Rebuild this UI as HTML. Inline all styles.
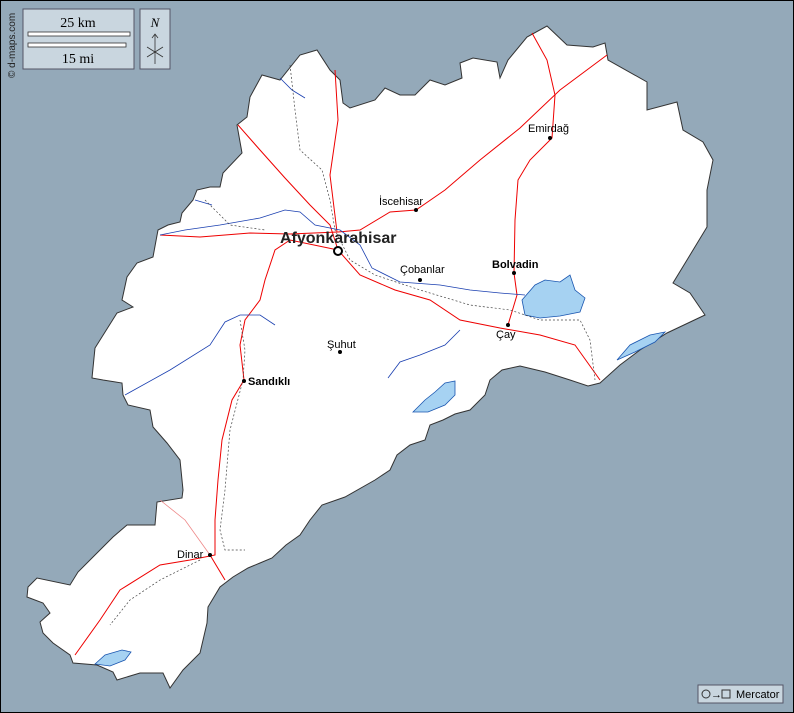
<!DOCTYPE html>
<html><head><meta charset="utf-8"><style>
body{margin:0;width:794px;height:713px;overflow:hidden;background:#94a9b9;font-family:"Liberation Sans",sans-serif}
svg{position:absolute;left:0;top:0}
</style></head><body>
<svg width="794" height="713" viewBox="0 0 794 713">
<rect x="0.5" y="0.5" width="793" height="712" fill="#94a9b9" stroke="#000"/>
<path d="M237,125 L242,153 L223,173 L220,187 L210,187 L197,190 L193,200 L182,213 L180,222 L168,225 L158,230 L153,257 L137,263 L127,277 L122,300 L133,307 L117,313 L95,348 L92,378 L103,380 L122,383 L123,395 L128,405 L150,410 L153,427 L167,443 L180,460 L183,490 L182,498 L157,502 L155,525 L127,525 L113,537 L90,560 L78,572 L70,585 L37,578 L28,587 L27,597 L43,603 L50,613 L40,622 L43,633 L53,643 L70,655 L73,663 L97,665 L113,672 L117,680 L140,673 L163,673 L170,688 L183,670 L200,653 L207,623 L208,607 L220,587 L233,577 L248,568 L260,563 L272,558 L286,545 L300,535 L310,520 L322,505 L345,497 L375,480 L390,470 L397,455 L410,445 L425,440 L430,425 L443,420 L455,414 L470,410 L485,395 L490,380 L502,370 L520,366 L545,372 L570,380 L588,386 L600,383 L620,365 L640,350 L667,333 L705,315 L690,293 L673,283 L687,260 L707,227 L707,190 L713,160 L703,142 L683,130 L677,102 L647,110 L647,82 L608,60 L605,43 L593,47 L567,45 L547,26 L527,37 L508,60 L500,78 L497,62 L473,58 L460,63 L462,78 L445,85 L430,80 L415,95 L400,95 L385,88 L375,100 L350,108 L343,103 L340,80 L330,70 L317,50 L300,55 L280,80 L262,75 L250,97 L247,117 Z" fill="#fff" stroke="#333" stroke-width="1"/>
<g fill="#a6d2f2" stroke="#1a56b0" stroke-width="0.8">
<path d="M522,300 L535,285 L545,280 L560,282 L570,275 L575,290 L585,298 L580,312 L560,316 L540,318 L525,315 Z"/>
<path d="M617,360 L630,345 L650,335 L665,332 L655,342 L635,352 Z"/>
<path d="M413,412 L425,400 L435,392 L445,383 L455,381 L455,395 L445,405 L428,412 Z"/>
<path d="M95,664 L105,655 L122,650 L131,652 L125,660 L110,666 Z"/>
</g>
<g fill="none" stroke="#e00" stroke-width="1">
<path d="M160,235 L200,237 L250,233 L290,234 L338,232 L360,230 L390,212 L416,210 L445,190 L480,160 L520,128 L560,90 L607,55"/>
<path d="M532,33 L547,60 L555,95 L552,138 L530,160 L518,180 L515,220 L514,273 L517,295 L508,325"/>
<path d="M238,125 L260,150 L285,178 L310,205 L330,225 L338,250 L360,275 L395,290 L430,300 L460,320 L500,328 L540,335 L575,345 L600,380"/>
<path d="M338,250 L290,240 L275,250 L265,280 L260,300 L245,320 L240,345 L244,380 L232,400 L222,440 L218,480 L215,520 L215,555 L190,560 L160,565 L120,590 L100,620 L75,655"/>
<path d="M210,555 L225,580"/>
<path d="M335,70 L338,120 L330,175 L337,232"/>
</g>
<g fill="none" stroke="#e88" stroke-width="0.8"><path d="M160,500 L185,520 L210,555"/></g>
<g fill="none" stroke="#1a3fb0" stroke-width="0.8">
<path d="M280,78 L292,90 L305,98"/>
<path d="M160,235 L185,230 L220,225 L260,218 L285,210 L300,212 L315,225 L340,230 L360,245 L372,268 L400,282 L440,285 L470,290 L500,293 L525,295"/>
<path d="M125,395 L170,370 L210,345 L225,322 L240,315 L260,315 L275,325"/>
<path d="M388,378 L400,362 L420,355 L445,345 L460,330"/>
<path d="M195,200 L212,205"/>
</g>
<g fill="none" stroke="#444" stroke-width="0.7" stroke-dasharray="2,2">
<path d="M290,65 L295,110 L300,150 L322,170 L330,200 L335,230 L350,260 L375,275 L420,290 L470,305 L510,310 L540,320 L580,320 L590,340 L595,380"/>
<path d="M205,200 L230,225 L265,230"/>
<path d="M240,320 L245,350 L243,380 L230,430 L225,490 L220,530 L225,550 L245,550"/>
<path d="M200,560 L160,580 L130,600 L110,625"/>
</g>
<g font-size="11" fill="#000">
<circle cx="416" cy="210" r="2"/><text x="379" y="205">İscehisar</text>
<circle cx="550" cy="138" r="2"/><text x="528" y="132">Emirdağ</text>
<circle cx="420" cy="280" r="2"/><text x="400" y="273">Çobanlar</text>
<circle cx="514" cy="273" r="2"/><text x="492" y="268" font-weight="bold">Bolvadin</text>
<circle cx="508" cy="325" r="2"/><text x="496" y="338">Çay</text>
<circle cx="340" cy="352" r="2"/><text x="327" y="348">Şuhut</text>
<circle cx="244" cy="381" r="2"/><text x="248" y="385" font-weight="bold">Sandıklı</text>
<circle cx="210" cy="555" r="2"/><text x="177" y="558">Dinar</text>
<circle cx="338" cy="251" r="4" fill="#fff" stroke="#000" stroke-width="2"/>
<text x="280" y="243" font-size="16" font-weight="bold" fill="#222">Afyonkarahisar</text>
</g>
<rect x="23" y="9" width="111" height="60" fill="#c9d6df" stroke="#556"/>
<text x="78" y="27" font-family="Liberation Serif" font-size="14" text-anchor="middle">25 km</text>
<rect x="28" y="32" width="102" height="4" fill="#fff" stroke="#333" stroke-width="0.8"/>
<rect x="28" y="43" width="98" height="4" fill="#fff" stroke="#333" stroke-width="0.8"/>
<text x="78" y="63" font-family="Liberation Serif" font-size="14" text-anchor="middle">15 mi</text>
<rect x="140" y="9" width="30" height="60" fill="#c9d6df" stroke="#556"/>
<text x="155" y="27" font-family="Liberation Serif" font-style="italic" font-size="13" text-anchor="middle">N</text>
<path d="M155,34 L155,64 M152,38 L155,34 L158,38 M147,47 L163,57 M147,57 L163,47" stroke="#333" fill="none" stroke-width="0.8"/>
<text transform="translate(15,78) rotate(-90)" font-size="10" fill="#222">© d-maps.com</text>
<rect x="698" y="685" width="85" height="18" fill="#c9d6df" stroke="#556"/>
<circle cx="706" cy="694" r="4" fill="none" stroke="#333"/>
<text x="711" y="698" font-size="11">→</text>
<rect x="722" y="690" width="8" height="8" fill="none" stroke="#333"/>
<text x="736" y="698" font-size="11">Mercator</text>
</svg>
</body></html>
